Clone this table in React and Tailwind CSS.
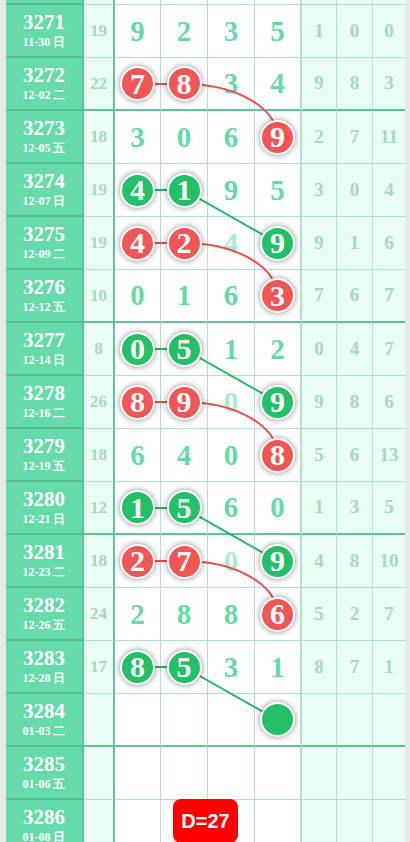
import React from "react";

const rows = [
  { no: "3271", date: "11-30 日", miss: "19", nums: ["9", "2", "3", "5"], tail: ["1", "0", "0"] },
  { no: "3272", date: "12-02 二", miss: "22", nums: ["7", "8", "3", "4"], tail: ["9", "8", "3"] },
  { no: "3273", date: "12-05 五", miss: "18", nums: ["3", "0", "6", "9"], tail: ["2", "7", "11"] },
  { no: "3274", date: "12-07 日", miss: "19", nums: ["4", "1", "9", "5"], tail: ["3", "0", "4"] },
  { no: "3275", date: "12-09 二", miss: "19", nums: ["4", "2", "4", "9"], tail: ["9", "1", "6"] },
  { no: "3276", date: "12-12 五", miss: "10", nums: ["0", "1", "6", "3"], tail: ["7", "6", "7"] },
  { no: "3277", date: "12-14 日", miss: "8", nums: ["0", "5", "1", "2"], tail: ["0", "4", "7"] },
  { no: "3278", date: "12-16 二", miss: "26", nums: ["8", "9", "0", "9"], tail: ["9", "8", "6"] },
  { no: "3279", date: "12-19 五", miss: "18", nums: ["6", "4", "0", "8"], tail: ["5", "6", "13"] },
  { no: "3280", date: "12-21 日", miss: "12", nums: ["1", "5", "6", "0"], tail: ["1", "3", "5"] },
  { no: "3281", date: "12-23 二", miss: "18", nums: ["2", "7", "0", "9"], tail: ["4", "8", "10"] },
  { no: "3282", date: "12-26 五", miss: "24", nums: ["2", "8", "8", "6"], tail: ["5", "2", "7"] },
  { no: "3283", date: "12-28 日", miss: "17", nums: ["8", "5", "3", "1"], tail: ["8", "7", "1"] },
  { no: "3284", date: "01-03 二", miss: "", nums: ["", "", "", ""], tail: ["", "", ""] },
  { no: "3285", date: "01-06 五", miss: "", nums: ["", "", "", ""], tail: ["", "", ""] },
  { no: "3286", date: "01-08 日", miss: "", nums: ["", "", "", ""], tail: ["", "", ""] },
];

// balls: [row index, column index] -> colour
const balls = {
  "1-0": "red", "1-1": "red", "2-3": "red",
  "3-0": "green", "3-1": "green", "4-3": "green",
  "4-0": "red", "4-1": "red", "5-3": "red",
  "6-0": "green", "6-1": "green", "7-3": "green",
  "7-0": "red", "7-1": "red", "8-3": "red",
  "9-0": "green", "9-1": "green", "10-3": "green",
  "10-0": "red", "10-1": "red", "11-3": "red",
  "12-0": "green", "12-1": "green", "13-3": "green",
};

// col3 digits the curve runs over
const faded = ["4-2", "7-2", "10-2"];

const cx = [131.5, 178, 225, 271.5];
const cy = (k) => 31 + 53 * k;

const links = [
  { k: 1, color: "red" },
  { k: 3, color: "green" },
  { k: 4, color: "red" },
  { k: 6, color: "green" },
  { k: 7, color: "red" },
  { k: 9, color: "green" },
  { k: 10, color: "red" },
  { k: 12, color: "green" },
];

const serif = "font-['Liberation_Serif',serif] font-bold";

const Ball = ({ color, n }) => (
  <div
    className={`relative z-10 w-[35px] h-[35px] rounded-full border-2 border-white flex items-center justify-center shadow-[0_0_6px_rgba(0,0,0,0.45)] text-white text-[30px] leading-none ${serif} ${
      color === "red" ? "bg-[#f05656]" : "bg-[#23c067]"
    }`}
  >
    {n}
  </div>
);

const Row = ({ r, k, thick, h = "h-[53px]" }) => {
  const line = thick ? "border-b-2 border-b-[#5cc597]" : "border-b border-b-[#aee3c9]";
  const widths = ["w-[46px] border-r", "w-[47px] border-r", "w-[47px] border-r", "w-[47px] border-r-2 border-r-[#5cc597]"];
  const tailW = ["w-[35px] border-r", "w-[36px] border-r", "w-[32px]"];
  return (
    <div className={`flex ${h}`}>
      <div className={`w-[78px] bg-[#66dbaa] border-r-2 border-r-[#56c493] border-b-2 border-b-[#55c192] flex flex-col items-center justify-center text-white ${serif}`}>
        {r && (
          <>
            <div className="text-[21px] leading-5">{r.no}</div>
            <div className="text-[12px] leading-[16px] mt-[2px]">{r.date}</div>
          </>
        )}
      </div>
      <div className={`w-[31px] bg-[#eafdf4] border-r-2 border-r-[#5cc597] ${line} flex items-center justify-center text-[17px] text-[#a4d9bd] ${serif}`}>
        {r && r.miss}
      </div>
      {widths.map((w, i) => {
        const b = r && balls[`${k}-${i}`];
        const fade = faded.includes(`${k}-${i}`);
        return (
          <div key={i} className={`${w} border-r-[#aee3c9] bg-white ${line} flex items-center justify-center`}>
            {b ? (
              <Ball color={b} n={r.nums[i]} />
            ) : (
              <span className={`text-[29px] leading-none ${serif} ${fade ? "text-[#a9ebce]" : "text-[#66d9a8]"}`}>
                {r && r.nums[i]}
              </span>
            )}
          </div>
        );
      })}
      {tailW.map((w, i) => (
        <div key={i} className={`${w} border-r-[#aee3c9] bg-[#eafdf4] ${line} flex items-center justify-center text-[19px] text-[#a4d9bd] ${serif}`}>
          {r && r.tail[i]}
        </div>
      ))}
    </div>
  );
};

export default function App() {
  return (
    <div className="min-h-screen bg-[#e9e9e9] overflow-hidden">
      <div className="relative ml-[6px] w-[399px] bg-white">
        <Row h="h-[5px]" thick={false} />
        {rows.map((r, k) => (
          <Row key={r.no} r={r} k={k} thick={(k - 1) % 4 === 0} />
        ))}

        <svg className="absolute inset-0 pointer-events-none" width="399" height="853">
          {links.map(({ k, color }) => {
            const stroke = color === "red" ? "#ee4c4c" : "#22b866";
            return (
              <g key={k} stroke={stroke} strokeWidth="2" fill="none">
                <line x1={cx[0]} y1={cy(k)} x2={cx[1]} y2={cy(k)} />
                {color === "red" ? (
                  <path d={`M${cx[1]} ${cy(k)} A${cx[3] - cx[1]} 53 0 0 1 ${cx[3]} ${cy(k + 1)}`} />
                ) : (
                  <line x1={cx[1]} y1={cy(k)} x2={cx[3]} y2={cy(k + 1)} />
                )}
              </g>
            );
          })}
        </svg>

        <div className="absolute left-[167px] top-[799px] z-20 w-[65px] h-[44px] rounded-lg bg-[#ff0000] flex items-center justify-center text-white text-[20px] font-bold font-['Liberation_Sans',Arial,sans-serif]">
          D=27
        </div>
      </div>
    </div>
  );
}
